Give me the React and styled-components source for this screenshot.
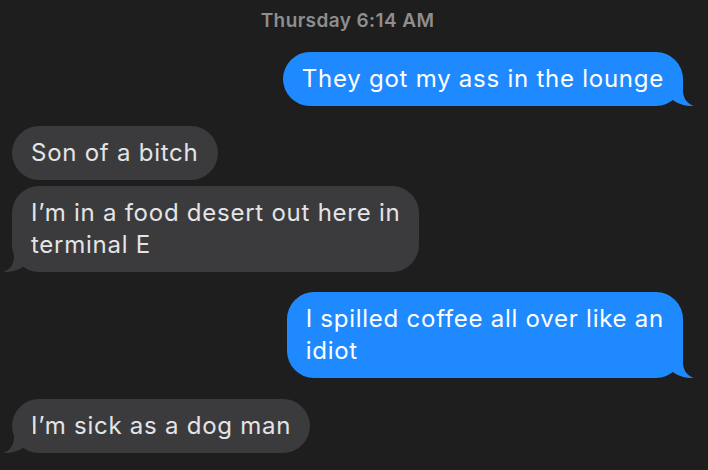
import React from "react";
import styled, { createGlobalStyle } from "styled-components";

const Global = createGlobalStyle`
  html, body { margin: 0; padding: 0; background: #1e1e1e; }
  body { font-family: Inter, "Noto Sans", "Liberation Sans", sans-serif; -webkit-font-smoothing: antialiased; }
`;

const Thread = styled.div`
  width: 708px;
  height: 470px;
  box-sizing: border-box;
  padding: 0 25px 0 12px;
  display: flex;
  flex-direction: column;
  overflow: hidden;
`;

const Stamp = styled.div`
  height: 40px;
  display: flex;
  align-items: center;
  justify-content: center;
  color: #8e8e90;
  font-size: 19px;
  font-weight: 600;
  letter-spacing: 0.4px;
`;

const Row = styled.div`
  display: flex;
  justify-content: ${(p) => (p.$sent ? "flex-end" : "flex-start")};
  margin-top: ${(p) => p.$gap}px;
`;

const Bubble = styled.div`
  position: relative;
  padding: 11px 19px;
  border-radius: 27px;
  background: ${(p) => (p.$sent ? "#1f8aff" : "#3b3b3d")};
  color: ${(p) => (p.$sent ? "#ffffff" : "#e4e4e6")};
  font-size: 24px;
  line-height: 32px;
  white-space: nowrap;
  letter-spacing: 0.75px;
`;

const Tail = styled.svg`
  position: absolute;
  bottom: 0;
  width: 30px;
  height: 28px;
  ${(p) => (p.$sent ? "right: -11px;" : "left: -9px; transform: scaleX(-1);")}
`;

const messages = [
  { sent: true, gap: 12, tail: true, lines: ["They got my ass in the lounge"] },
  { sent: false, gap: 20, tail: false, lines: ["Son of a bitch"] },
  { sent: false, gap: 6, tail: true, lines: ["I\u2019m in a food desert out here in", "terminal E"] },
  { sent: true, gap: 20, tail: true, lines: ["I spilled coffee all over like an", "idiot"] },
  { sent: false, gap: 21, tail: true, lines: ["I\u2019m sick as a dog man"] },
];

export default function App() {
  return (
    <>
      <Global />
      <Thread>
        <Stamp>Thursday 6:14 AM</Stamp>
        {messages.map((m, i) => (
          <Row key={i} $sent={m.sent} $gap={m.gap}>
            <Bubble $sent={m.sent}>
              {m.lines.map((l, j) => (
                <React.Fragment key={j}>
                  {j > 0 && <br />}
                  {l}
                </React.Fragment>
              ))}
              {m.tail && (
                <Tail $sent={m.sent} viewBox="0 0 30 28">
                  <path
                    d="M19 0 L19 14 C20 22 24 26 30 28 C24 28.4 15 27 9 22 L0 22 L0 0 Z"
                    fill={m.sent ? "#1f8aff" : "#3b3b3d"}
                  />
                </Tail>
              )}
            </Bubble>
          </Row>
        ))}
      </Thread>
    </>
  );
}
